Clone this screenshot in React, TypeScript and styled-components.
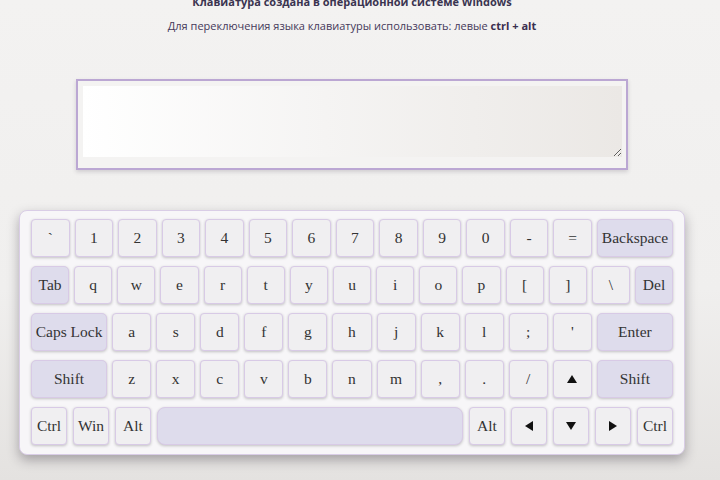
import React from "react";
import styled, { createGlobalStyle } from "styled-components";

const GlobalStyle = createGlobalStyle`
  html, body {
    margin: 0;
    padding: 0;
  }
  body {
    background: #f1f0ef;
    overflow: hidden;
  }
`;

const Backdrop = styled.div`
  width: 720px;
  height: 480px;
  background: linear-gradient(to bottom, #f3f2f1 0%, #f0efee 60%, #e4e2e0 100%);
  overflow: hidden;
`;

const Page = styled.div`
  width: 704px;
  display: flex;
  flex-direction: column;
  align-items: center;
  font-family: "Open Sans", "Noto Sans", sans-serif;
`;

const Title = styled.p`
  margin: -6px 0 0;
  font-size: 11px;
  line-height: 15px;
  font-weight: 700;
  color: #3a3450;
  text-align: center;
`;

const Hint = styled.p`
  margin: 9px 0 0;
  font-size: 11px;
  line-height: 15px;
  color: #45395a;
  text-align: center;

  b {
    color: #3a2f4f;
    font-weight: 700;
  }
`;

const InputFrame = styled.div`
  margin-top: 46px;
  width: 552px;
  box-sizing: border-box;
  border: 2px solid #bba7d3;
  padding: 5px 4px 11px 5px;
  background: #f4f3f2;
  box-shadow: 0 2px 4px rgba(60, 50, 70, 0.18);
`;

const TextInput = styled.textarea`
  display: block;
  width: 100%;
  height: 71px;
  box-sizing: border-box;
  border: none;
  outline: none;
  margin: 0;
  padding: 4px;
  background: linear-gradient(to right, #ffffff 0%, #f5f4f3 45%, #ebe8e5 100%);
  font-family: "Liberation Serif", serif;
  font-size: 15px;
  color: #333;
`;

const Board = styled.div`
  margin-top: 40px;
  width: 666px;
  box-sizing: border-box;
  border: 1px solid #d9cde6;
  border-radius: 8px;
  background: #f7f6f8;
  padding: 8px 11px 9px 11px;
  display: flex;
  flex-direction: column;
  gap: 9px;
  box-shadow: 0 5px 12px rgba(40, 35, 45, 0.35);
`;

const Row = styled.div<{ $gap?: number }>`
  display: flex;
  gap: ${(p) => p.$gap ?? 5}px;
`;

const Key = styled.div<{ $grow?: number; $fixed?: number; $special?: boolean }>`
  flex: ${(p) => (p.$fixed ? `0 0 ${p.$fixed}px` : `${p.$grow ?? 1} 1 0`)};
  height: 38px;
  box-sizing: border-box;
  display: flex;
  align-items: center;
  justify-content: center;
  border: 1.5px solid #d8cae6;
  border-radius: ${(p) => (p.$special ? 5 : 4)}px;
  background: ${(p) => (p.$special ? "#dedcec" : "#f0eff1")};
  box-shadow: 0 1px 3px rgba(0, 0, 0, 0.22);
  font-family: "Liberation Serif", "Times New Roman", serif;
  font-size: 15.5px;
  color: #333;
  white-space: nowrap;
  user-select: none;
`;

const SpaceBar = styled.div`
  flex: 1 1 0;
  height: 38px;
  box-sizing: border-box;
  border: 1.5px solid #d8cae6;
  border-radius: 8px;
  background: #dedcec;
  box-shadow: 0 1px 3px rgba(0, 0, 0, 0.22);
`;

const ArrowIcon = styled.svg`
  width: 10px;
  height: 10px;
  display: block;
  fill: #111;
`;

type Dir = "up" | "down" | "left" | "right";

const arrowPoints: Record<Dir, string> = {
  up: "5,1 10,9 0,9",
  down: "0,1 10,1 5,9",
  left: "1,5 9,0 9,10",
  right: "1,0 9,5 1,10",
};

function Arrow({ dir }: { dir: Dir }) {
  return (
    <ArrowIcon viewBox="0 0 10 10">
      <polygon points={arrowPoints[dir]} />
    </ArrowIcon>
  );
}

const numberRow = ["`", "1", "2", "3", "4", "5", "6", "7", "8", "9", "0", "-", "="];
const topRow = ["q", "w", "e", "r", "t", "y", "u", "i", "o", "p", "[", "]", "\\"];
const homeRow = ["a", "s", "d", "f", "g", "h", "j", "k", "l", ";", "'"];
const lowRow = ["z", "x", "c", "v", "b", "n", "m", ",", ".", "/"];

export default function App() {
  return (
    <Backdrop>
      <GlobalStyle />
      <Page>
        <Title>Клавиатура создана в операционной системе Windows</Title>
        <Hint>
          Для переключения языка клавиатуры использовать: левые <b>ctrl + alt</b>
        </Hint>
        <InputFrame>
          <TextInput />
        </InputFrame>
        <Board>
          <Row>
            {numberRow.map((k) => (
              <Key key={k}>{k}</Key>
            ))}
            <Key $grow={2.03} $special>
              Backspace
            </Key>
          </Row>
          <Row>
            <Key $special>Tab</Key>
            {topRow.map((k) => (
              <Key key={k}>{k}</Key>
            ))}
            <Key $special>Del</Key>
          </Row>
          <Row>
            <Key $grow={2} $special>
              Caps Lock
            </Key>
            {homeRow.map((k) => (
              <Key key={k}>{k}</Key>
            ))}
            <Key $grow={2} $special>
              Enter
            </Key>
          </Row>
          <Row>
            <Key $grow={2} $special>
              Shift
            </Key>
            {lowRow.map((k) => (
              <Key key={k}>{k}</Key>
            ))}
            <Key>
              <Arrow dir="up" />
            </Key>
            <Key $grow={2} $special>
              Shift
            </Key>
          </Row>
          <Row $gap={6}>
            <Key $fixed={36}>Ctrl</Key>
            <Key $fixed={36}>Win</Key>
            <Key $fixed={36}>Alt</Key>
            <SpaceBar />
            <Key $fixed={36}>Alt</Key>
            <Key $fixed={36}>
              <Arrow dir="left" />
            </Key>
            <Key $fixed={36}>
              <Arrow dir="down" />
            </Key>
            <Key $fixed={36}>
              <Arrow dir="right" />
            </Key>
            <Key $fixed={36}>Ctrl</Key>
          </Row>
        </Board>
      </Page>
    </Backdrop>
  );
}
